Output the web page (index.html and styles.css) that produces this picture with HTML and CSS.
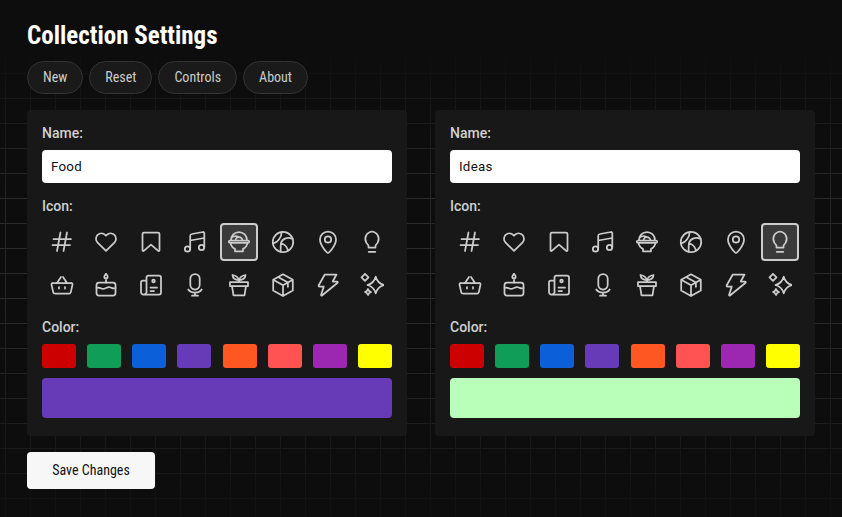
FILE: index.html
```html
<!doctype html>
<html lang="en">

<head>
	<meta charset="utf-8">
	<title>Collection Settings</title>
	<meta name="viewport" content="width=device-width, initial-scale=1"/>
	<link rel="stylesheet" href="styles.css">
</head>

<body>
	<svg class="icon-defs" aria-hidden="true">
		<symbol id="i-hash" viewBox="0 0 24 24"><path d="M3.500 9h17.500M2.500 15h17.500M10.500 2.500 7 21M17 2.500 13.500 21"/></symbol>
		<symbol id="i-heart" viewBox="0 0 24 24"><path d="M12 20.800 3.600 12.700a5.500 5.500 0 0 1 0-7.800 5.500 5.500 0 0 1 7.600 0l.8.800.8-.800a5.500 5.500 0 0 1 7.600 0 5.500 5.500 0 0 1 0 7.800z"/></symbol>
		<symbol id="i-bookmark" viewBox="0 0 24 24"><path d="M3.500 4A1.500 1.500 0 0 1 5 2.500h14A1.500 1.500 0 0 1 20.500 4v16.300a.8.800 0 0 1-1.300.6L12 14.700l-7.200 6.200a.8.800 0 0 1-1.300-.6z"/></symbol>
		<symbol id="i-music" viewBox="0 0 24 24"><circle cx="4.500" cy="19" r="2.700"/><circle cx="18.500" cy="17.500" r="2.700"/><path d="M7.200 19V6a2 2 0 0 1 1.700-2L20 2a1.200 1.200 0 0 1 1.300 1.200v14.300M7.200 10.500 21.200 8"/></symbol>
		<symbol id="i-basket" viewBox="0 0 24 24"><path d="M2.800 10h18.400a1.300 1.300 0 0 1 1.300 1.600l-1.700 7.500a2 2 0 0 1-2 1.600H5.200a2 2 0 0 1-2-1.600l-1.700-7.500A1.300 1.300 0 0 1 2.800 10zM7 10l4-6M17 10l-4-6M9 14v1.500M15 14v1.500"/></symbol>
		<symbol id="i-cake" viewBox="0 0 24 24"><rect x="2.500" y="9.500" width="19" height="13" rx="2.500"/><path d="M2.500 15c2.200-1 3-.2 4.800.5 2 .8 3 .2 4.700-.5s2.700-1.300 4.700-.5c1.800.7 2.600 1.500 4.800.5M12 .8c1 1.200 1.700 2 1.700 3a1.700 1.700 0 0 1-3.400 0c0-1 .7-1.800 1.700-3zM12 7v2.500"/></symbol>
		<symbol id="i-news" viewBox="0 0 24 24"><path d="M7.500 19.500V4.500a2 2 0 0 1 2-2H20a2 2 0 0 1 2 2v15a2 2 0 0 1-2 2H4.500M7.500 7.500H4a2 2 0 0 0-2 2v9.500a2.500 2.500 0 0 0 2.500 2.500 3 3 0 0 0 3-2M11.500 14.500h6.500M11.500 18h3.500"/><circle cx="14.500" cy="8" r="1.300"/></symbol>
		<symbol id="i-mic" viewBox="0 0 24 24"><rect x="7.300" y="1" width="9.400" height="15.500" rx="4.700"/><path d="M5.300 16.500c1 1.800 3.500 3 6.700 3s5.700-1.200 6.700-3M12 19.500v3M9 22.700h6"/></symbol>
		<symbol id="i-bowl" viewBox="0 0 24 24"><path d="M3 10.500h18a1.200 1.200 0 0 1 0 2.400H3a1.200 1.200 0 0 1 0-2.400zM3.500 12.900c.5 3 2.500 5 4.500 6v2.400h8v-2.400c2-1 4-3 4.500-6M4 10.500C4 5.500 7.500 2.200 12 2.200s8 3.300 8 8.300M8.500 10.500a3.500 3.500 0 0 1 7 0M4.500 7.500C7 5.800 10 6 12 7"/></symbol>
		<symbol id="i-ball" viewBox="0 0 24 24"><circle cx="12" cy="12" r="10.200"/><path d="M10.700 2C10.500 7 7 12.500 2 13.500M21.700 9C16 6.500 11 9 10 13c-.6 3-.4 6-.3 8.700M10 13.500c3 .5 6 3 7 7"/></symbol>
		<symbol id="i-pin" viewBox="0 0 24 24"><path d="M12 22.800c-1 0-8-7.300-8-13.300a8 8 0 0 1 16 0c0 6-7 13.300-8 13.300z"/><circle cx="12" cy="9.500" r="3.200"/></symbol>
		<symbol id="i-bulb" viewBox="0 0 24 24"><path d="M8.500 17.500v-1.300c0-1.200-1-2.200-2-3.200A7.500 7.500 0 0 1 12 1.500a7.500 7.500 0 0 1 5.500 11.500c-1 1-2 2-2 3.200v1.300zM8.700 21.800h6.600"/></symbol>
		<symbol id="i-plant" viewBox="0 0 24 24"><path d="M3 9h18v4H3zM5 13l1.500 9.300h11L19 13M12 9V7M12 7C11 4 9 2.500 5.500 2c0 3.200 3 5.300 6.500 5zM12 7c1-3 3-4.500 6.500-5 0 3.200-3 5.300-6.500 5z"/></symbol>
		<symbol id="i-box" viewBox="0 0 24 24"><path d="M12 1.300 21.800 6.800v10.700L12 23l-9.800-5.500V6.800zM2.200 6.800 12 12.300l9.800-5.500M12 12.300V23M7.100 4 16.900 9.500v4.300"/></symbol>
		<symbol id="i-bolt" viewBox="0 0 24 24"><path d="M8.800 1.500h11.700l-3.800 7H21a.8.800 0 0 1 .6 1.300L6 22.500c-.5.400-1.100 0-.9-.6l2.700-8.400H3.300a.8.800 0 0 1-.7-1z"/></symbol>
		<symbol id="i-sparkle" viewBox="0 0 24 24"><path d="M15.700 3.700c1.300 4.800 3.500 7 8.300 8.300-4.800 1.300-7 3.500-8.300 8.300-1.300-4.800-3.500-7-8.300-8.300 4.800-1.300 7-3.500 8.300-8.300zM5 .8 8.500 4.300 5 7.800 1.500 4.300zM8 16c.5 1.600 1.300 2.500 3 3-1.700.5-2.500 1.400-3 3-.5-1.600-1.300-2.500-3-3 1.700-.5 2.500-1.400 3-3z"/></symbol>
	</svg>

	<h1 class="page-title">Collection Settings</h1>

	<nav class="toolbar">
		<button class="pill">New</button>
		<button class="pill">Reset</button>
		<button class="pill">Controls</button>
		<button class="pill">About</button>
	</nav>

	<main class="cards">
		<section class="card">
			<label class="field-label" for="nameFood">Name:</label>
			<input class="name-input" id="nameFood" type="text" value="Food">

			<div class="field-label">Icon:</div>
			<div class="icon-grid">
				<button class="icon-btn"><svg><use href="#i-hash"/></svg></button>
				<button class="icon-btn"><svg><use href="#i-heart"/></svg></button>
				<button class="icon-btn"><svg><use href="#i-bookmark"/></svg></button>
				<button class="icon-btn"><svg><use href="#i-music"/></svg></button>
				<button class="icon-btn selected"><svg><use href="#i-bowl"/></svg></button>
				<button class="icon-btn"><svg><use href="#i-ball"/></svg></button>
				<button class="icon-btn"><svg><use href="#i-pin"/></svg></button>
				<button class="icon-btn"><svg><use href="#i-bulb"/></svg></button>
				<button class="icon-btn"><svg><use href="#i-basket"/></svg></button>
				<button class="icon-btn"><svg><use href="#i-cake"/></svg></button>
				<button class="icon-btn"><svg><use href="#i-news"/></svg></button>
				<button class="icon-btn"><svg><use href="#i-mic"/></svg></button>
				<button class="icon-btn"><svg><use href="#i-plant"/></svg></button>
				<button class="icon-btn"><svg><use href="#i-box"/></svg></button>
				<button class="icon-btn"><svg><use href="#i-bolt"/></svg></button>
				<button class="icon-btn"><svg><use href="#i-sparkle"/></svg></button>
			</div>

			<div class="field-label">Color:</div>
			<div class="swatches">
				<button class="swatch red"></button>
				<button class="swatch green"></button>
				<button class="swatch blue"></button>
				<button class="swatch purple"></button>
				<button class="swatch orange"></button>
				<button class="swatch coral"></button>
				<button class="swatch magenta"></button>
				<button class="swatch yellow"></button>
			</div>
			<div class="preview purple"></div>
		</section>

		<section class="card">
			<label class="field-label" for="nameIdeas">Name:</label>
			<input class="name-input" id="nameIdeas" type="text" value="Ideas">

			<div class="field-label">Icon:</div>
			<div class="icon-grid">
				<button class="icon-btn"><svg><use href="#i-hash"/></svg></button>
				<button class="icon-btn"><svg><use href="#i-heart"/></svg></button>
				<button class="icon-btn"><svg><use href="#i-bookmark"/></svg></button>
				<button class="icon-btn"><svg><use href="#i-music"/></svg></button>
				<button class="icon-btn"><svg><use href="#i-bowl"/></svg></button>
				<button class="icon-btn"><svg><use href="#i-ball"/></svg></button>
				<button class="icon-btn"><svg><use href="#i-pin"/></svg></button>
				<button class="icon-btn selected"><svg><use href="#i-bulb"/></svg></button>
				<button class="icon-btn"><svg><use href="#i-basket"/></svg></button>
				<button class="icon-btn"><svg><use href="#i-cake"/></svg></button>
				<button class="icon-btn"><svg><use href="#i-news"/></svg></button>
				<button class="icon-btn"><svg><use href="#i-mic"/></svg></button>
				<button class="icon-btn"><svg><use href="#i-plant"/></svg></button>
				<button class="icon-btn"><svg><use href="#i-box"/></svg></button>
				<button class="icon-btn"><svg><use href="#i-bolt"/></svg></button>
				<button class="icon-btn"><svg><use href="#i-sparkle"/></svg></button>
			</div>

			<div class="field-label">Color:</div>
			<div class="swatches">
				<button class="swatch red"></button>
				<button class="swatch green"></button>
				<button class="swatch blue"></button>
				<button class="swatch purple"></button>
				<button class="swatch orange"></button>
				<button class="swatch coral"></button>
				<button class="swatch magenta"></button>
				<button class="swatch yellow"></button>
			</div>
			<div class="preview mint"></div>
		</section>
	</main>

	<button class="save-btn">Save Changes</button>
</body></html>
```

FILE: styles.css
```css
html {
	height: 100%;
}

body {
	margin: 0;
	min-height: 100%;
	box-sizing: border-box;
	padding: 21px 27px 0;
	overflow: hidden;
	font-family: Roboto, sans-serif;
	color: #ccc;
	background-color: #0d0d0d;
	background-image:
		linear-gradient(to bottom, #0d0d0d 45px, rgba(13,13,13,0) 200px, rgba(13,13,13,0) 300px, rgba(13,13,13,.85) 517px),
		linear-gradient(to right, #262626 1px, transparent 1px),
		linear-gradient(to bottom, #2c2c2c 1px, transparent 1px);
	background-size: auto, 25px 25px, 25px 25px;
	background-position: 0 0, 5px 0, 0 23px;
}

.icon-defs {
	display: none;
}

.page-title {
	margin: 0;
	height: 30px;
	font-size: 25px;
	line-height: 30px;
	font-weight: 700;
	font-stretch: 75%;
	color: #fff;
}

.toolbar {
	display: flex;
	gap: 6px;
	margin-top: 10px;
}

.pill {
	height: 33px;
	padding: 0 15px 2px;
	border: 1px solid #333;
	border-radius: 17px;
	background-color: #1a1a1a;
	color: #ccc;
	font-family: inherit;
	font-size: 14px;
	font-stretch: 75%;
}

.cards {
	display: flex;
	gap: 28px;
	margin-top: 16px;
}

.card {
	width: 380px;
	height: 326px;
	box-sizing: border-box;
	padding: 15px;
	border-radius: 4px;
	background-color: #181818;
}

.field-label {
	display: block;
	height: 17px;
	font-size: 14px;
	line-height: 17px;
	font-weight: 500;
	color: #d0d0d0;
}

.name-input {
	display: block;
	width: 100%;
	height: 33px;
	box-sizing: border-box;
	margin: 8px 0 15px;
	padding: 0 9px 1px;
	border: 0;
	border-radius: 4px;
	background-color: #fff;
	color: #111;
	font-family: inherit;
	font-size: 13.33px;
	letter-spacing: .25px;
}

.icon-grid {
	display: grid;
	grid-template-columns: repeat(8, 38px);
	justify-content: space-between;
	row-gap: 5px;
	margin: 8px 0 15px;
	padding: 0 1px;
}

.icon-btn {
	width: 38px;
	height: 38px;
	display: flex;
	align-items: center;
	justify-content: center;
	padding: 0;
	border: 2px solid transparent;
	border-radius: 4px;
	background: none;
}

.icon-btn svg {
	width: 24px;
	height: 24px;
	overflow: visible;
	fill: none;
	stroke: #ccc;
	stroke-width: 1.75;
	stroke-linecap: round;
	stroke-linejoin: round;
}

.icon-btn.selected {
	border-color: #ccc;
	background-color: #3a3a3a;
}

.swatches {
	display: flex;
	justify-content: space-between;
	margin: 8px 0 10px;
}

.swatch {
	width: 34px;
	height: 24px;
	padding: 0;
	border: 0;
	border-radius: 3px;
}

.preview {
	height: 40px;
	border-radius: 4px;
}

.red { background-color: #cc0000; }
.green { background-color: #0f9d58; }
.blue { background-color: #0b5fd8; }
.purple { background-color: #673ab7; }
.orange { background-color: #ff5722; }
.coral { background-color: #ff5252; }
.magenta { background-color: #9c27b0; }
.yellow { background-color: #ffff00; }
.mint { background-color: #b9ffb9; }

.save-btn {
	display: block;
	width: 128px;
	height: 37px;
	margin-top: 16px;
	padding: 0 0 2px;
	border: 0;
	border-radius: 4px;
	background-color: #f7f7f7;
	color: #111;
	font-family: inherit;
	font-size: 14px;
	font-stretch: 75%;
}
```
